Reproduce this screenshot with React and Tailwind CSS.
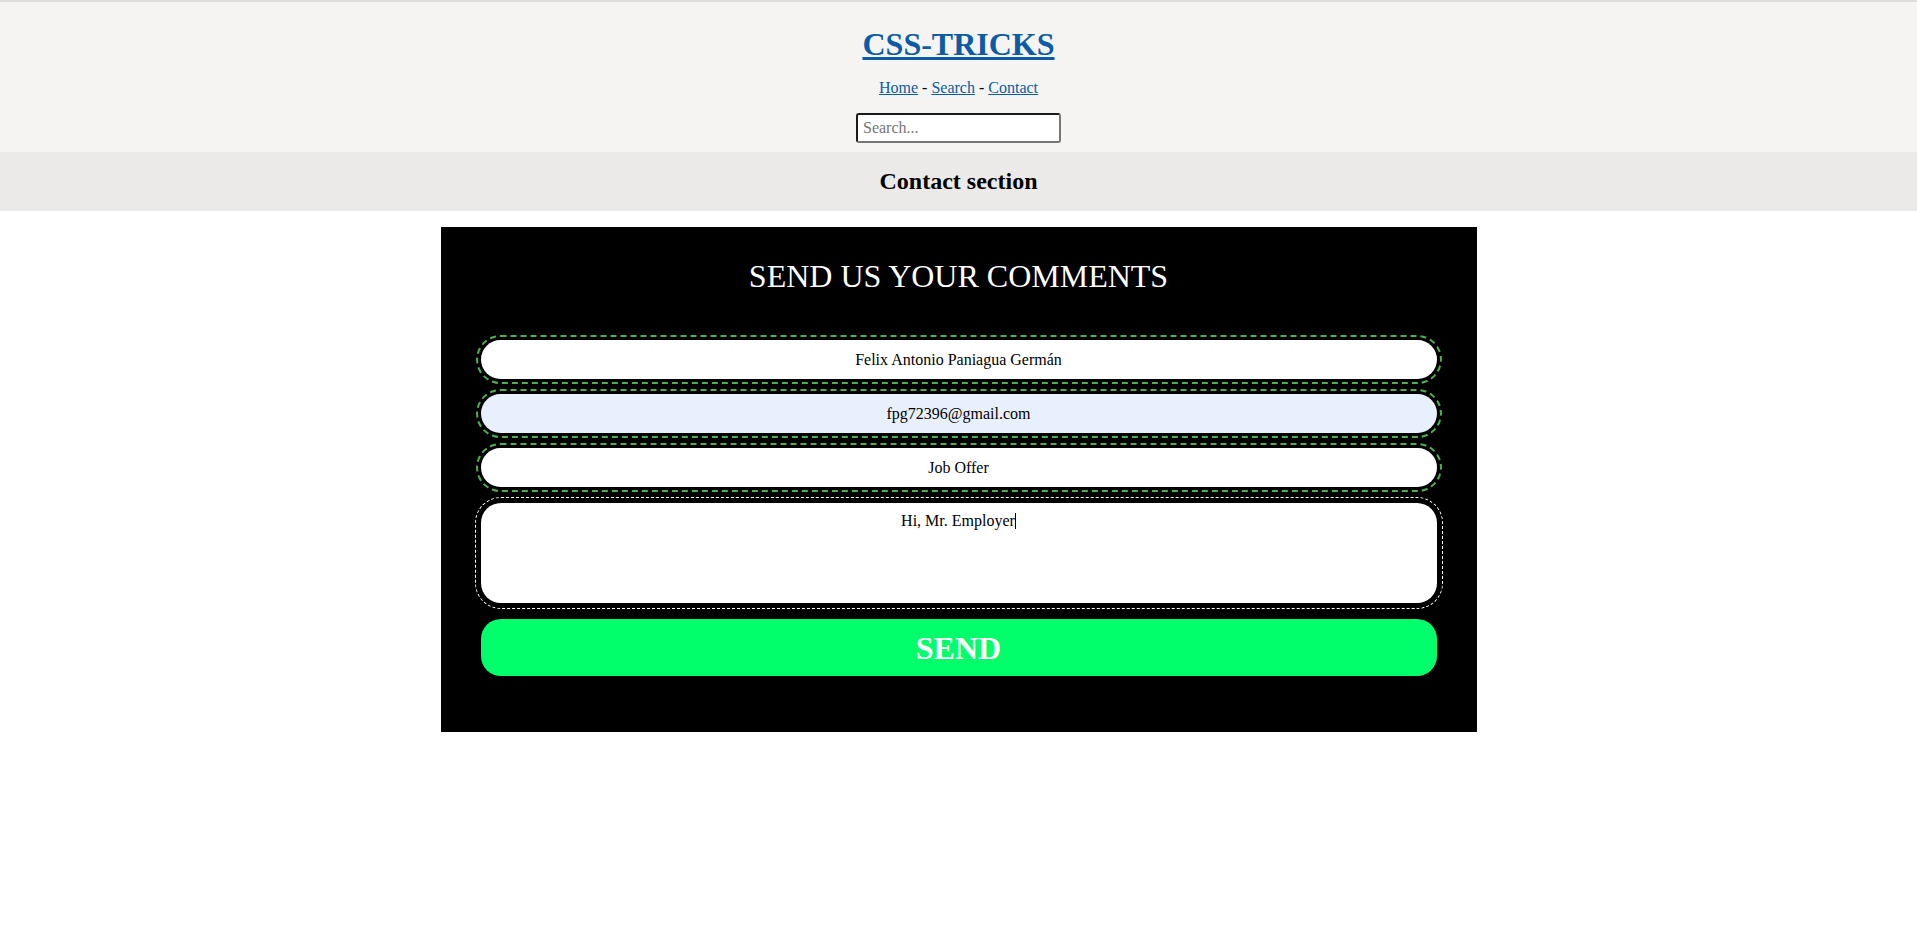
import { useState } from "react";

export default function App() {
  const [name, setName] = useState("Felix Antonio Paniagua Germán");
  const [email, setEmail] = useState("fpg72396@gmail.com");
  const [subject, setSubject] = useState("Job Offer");

  return (
    <div className="min-h-screen bg-white font-['Liberation_Serif',serif] text-black">
      {/* Header */}
      <header className="bg-[#f5f4f2] border-t-2 border-[#dcdcdc] pt-[24px] pb-[9px] flex flex-col items-center">
        <h1 className="text-[32px] leading-[36px] font-bold">
          <a href="#" className="text-[#0b5ca5] underline">CSS-TRICKS</a>
        </h1>
        <nav className="mt-[17px] text-[16px] leading-[18px]">
          <a href="#" className="text-[#0b5ca5] underline">Home</a> -{" "}
          <a href="#" className="text-[#0b5ca5] underline">Search</a> -{" "}
          <a href="#" className="text-[#0b5ca5] underline">Contact</a>
        </nav>
        <input
          type="text"
          placeholder="Search..."
          className="mt-[16px] w-[205px] h-[30px] bg-white rounded-[3px] border-2 border-t-[#1b1b1b] border-l-[#1b1b1b] border-b-[#767676] border-r-[#767676] px-[5px] text-[16px] placeholder:text-[#757575] outline-none"
        />
      </header>

      {/* Section title */}
      <section className="bg-[#ebeae8] pt-[15px] pb-[16px]">
        <h2 className="text-center text-[24px] leading-[28px] font-bold">Contact section</h2>
      </section>

      {/* Form */}
      <main className="pt-[16px]">
        <div className="w-[1036px] mx-auto bg-black px-[40px] pt-[31px] pb-[56px]">
          <h2 className="text-center text-white text-[32px] leading-[36px]">SEND US YOUR COMMENTS</h2>
          <form className="mt-[46px] flex flex-col" onSubmit={(e) => e.preventDefault()}>
            <input
              value={name}
              onChange={(e) => setName(e.target.value)}
              className="h-[39px] w-full rounded-full bg-white text-center text-[16px] outline-2 outline-dashed outline-[#4caf50] outline-offset-[3px]"
            />
            <input
              value={email}
              onChange={(e) => setEmail(e.target.value)}
              className="mt-[15px] h-[39px] w-full rounded-full bg-[#e8f0fe] text-center text-[16px] outline-2 outline-dashed outline-[#4caf50] outline-offset-[3px]"
            />
            <input
              value={subject}
              onChange={(e) => setSubject(e.target.value)}
              className="mt-[15px] h-[39px] w-full rounded-full bg-white text-center text-[16px] outline-2 outline-dashed outline-[#4caf50] outline-offset-[3px]"
            />
            <div className="mt-[16px] h-[100px] w-full rounded-[20px] bg-white pt-[9px] text-center text-[16px] leading-[18px] outline-1 outline-dashed outline-white outline-offset-[5px]">
              Hi, Mr. Employer
              <span className="inline-block w-px h-[16px] bg-black align-[-3px]"></span>
            </div>
            <button
              type="submit"
              className="mt-[16px] h-[57px] w-full rounded-[20px] bg-[#00ff6a] text-white text-[32px] leading-[36px] font-bold"
            >
              SEND
            </button>
          </form>
        </div>
      </main>
    </div>
  );
}
